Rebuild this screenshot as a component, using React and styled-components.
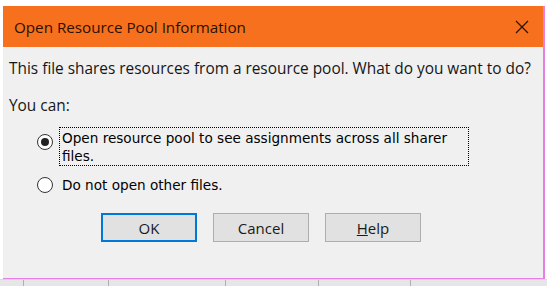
import styled, { createGlobalStyle } from "styled-components";

const GlobalStyle = createGlobalStyle`
  html, body {
    margin: 0;
    padding: 0;
    background: #ffffff;
    width: 547px;
    height: 286px;
    overflow: hidden;
  }
`;

const Screen = styled.div`
  width: 547px;
  height: 286px;
  display: flex;
  flex-direction: column;
  padding: 6px 0 0 3px;
  box-sizing: border-box;
`;

const Dialog = styled.div`
  width: 542px;
  height: 274px;
  display: flex;
  flex-direction: column;
  background: #f0f0f0;
  border-right: 2px solid #e67ee6;
  border-bottom: 1px solid #e67ee6;
  box-sizing: border-box;
`;

const TitleBar = styled.div`
  height: 41px;
  background: #f7701d;
  display: flex;
  align-items: center;
  justify-content: space-between;
  padding: 0 14px 0 11px;
  color: #2b1200;
  font-family: "Open Sans", sans-serif;
  font-size: 15.2px;
  flex-shrink: 0;
`;

const Close = styled.svg`
  width: 14px;
  height: 14px;
`;

const Body = styled.div`
  flex: 1;
  display: flex;
  flex-direction: column;
  padding: 12px 0 0 6px;
  font-family: "Open Sans", sans-serif;
  font-size: 15.4px;
  color: #161616;
`;

const Line = styled.div`
  height: 20px;
  line-height: 20px;
  margin-bottom: ${(p) => p.gap || 0}px;
  white-space: nowrap;
`;

const Options = styled.div`
  display: flex;
  flex-direction: column;
  gap: 10px;
  padding-left: 28px;
  margin-top: 12px;
`;

const Option = styled.label`
  display: flex;
  align-items: flex-start;
  gap: 7px;
  font-family: "DejaVu Sans", sans-serif;
  font-size: 13.6px;
  color: #000;
`;

const Radio = styled.span`
  width: 14px;
  height: 14px;
  margin-top: ${(p) => (p.checked ? 6 : 2)}px;
  border-radius: 50%;
  border: 1px solid #333;
  background: #fff;
  display: flex;
  align-items: center;
  justify-content: center;
  flex-shrink: 0;
  &::after {
    content: "";
    width: 8px;
    height: 8px;
    border-radius: 50%;
    background: ${(p) => (p.checked ? "#222" : "transparent")};
  }
`;

const Label = styled.span`
  width: ${(p) => (p.focus ? "408px" : "auto")};
  line-height: 18px;
  padding: 1px 2px 0 2px;
  box-sizing: border-box;
  outline: ${(p) => (p.focus ? "1px dotted #000" : "none")};
`;

const Buttons = styled.div`
  display: flex;
  gap: 16px;
  padding-left: 92px;
  margin-top: 19px;
`;

const Button = styled.button`
  width: 96px;
  height: 29px;
  background: #e1e1e1;
  border: ${(p) => (p.primary ? "2px solid #0078d7" : "1px solid #adadad")};
  font-family: "Open Sans", sans-serif;
  font-size: 15px;
  color: #1a1a1a;
  padding: 0;
  u {
    text-decoration: underline;
  }
`;

const Grid = styled.div`
  height: 6px;
  margin-left: -3px;
  padding-left: 23px;
  background: #e6e6e6;
  display: flex;
  border-top: 1px solid #d8d8d8;
`;

const Cell = styled.div`
  width: ${(p) => p.w}px;
  border-left: 1px solid #b0b0b0;
  flex-shrink: 0;
`;

export default function App() {
  return (
    <>
      <GlobalStyle />
      <Screen>
        <Dialog>
          <TitleBar>
            <span>Open Resource Pool Information</span>
            <Close viewBox="0 0 14 14">
              <path d="M1 1 L13 13 M13 1 L1 13" stroke="#2b1200" strokeWidth="1.2" />
            </Close>
          </TitleBar>
          <Body>
            <Line gap={17}>
              This file shares resources from a resource pool. What do you want to do?
            </Line>
            <Line>You can:</Line>
            <Options>
              <Option>
                <Radio checked />
                <Label focus>
                  Open resource pool to see assignments across all sharer files.
                </Label>
              </Option>
              <Option>
                <Radio />
                <Label>Do not open other files.</Label>
              </Option>
            </Options>
            <Buttons>
              <Button primary>OK</Button>
              <Button>Cancel</Button>
              <Button>
                <u>H</u>elp
              </Button>
            </Buttons>
          </Body>
        </Dialog>
        <Grid>
          {[84, 116, 92, 91, 141].map((w, i) => (
            <Cell key={i} w={w} />
          ))}
        </Grid>
      </Screen>
    </>
  );
}
